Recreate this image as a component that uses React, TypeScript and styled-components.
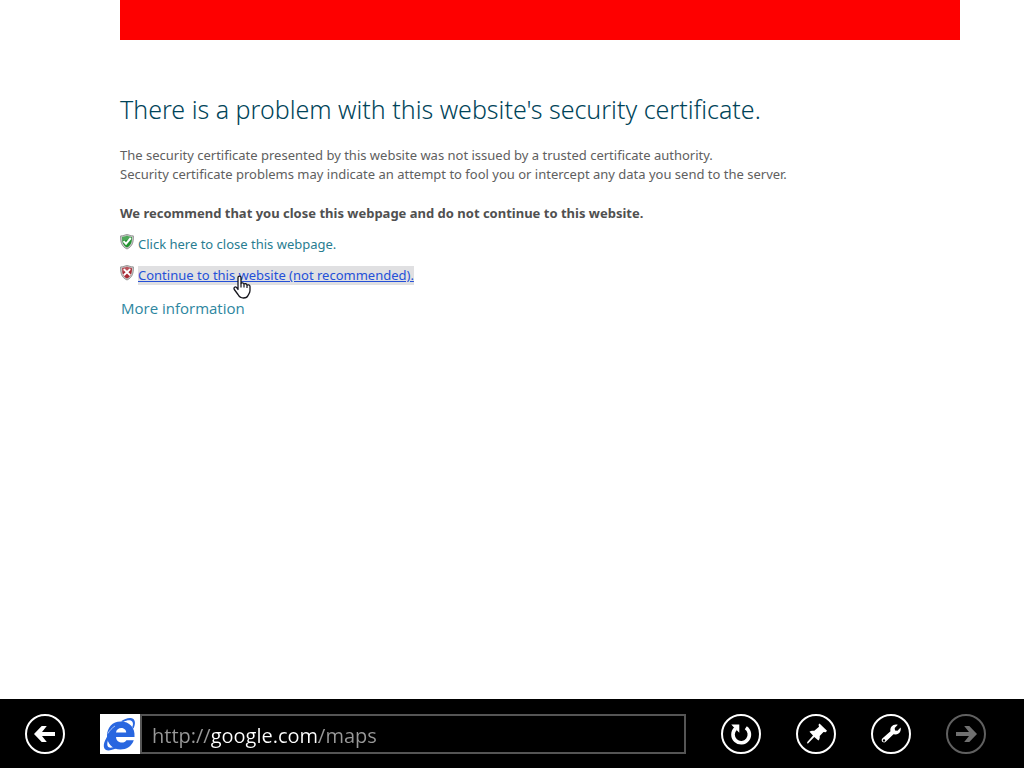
import React, { useState } from "react";
import styled, { createGlobalStyle, css } from "styled-components";

const GlobalStyle = createGlobalStyle`
  *, *::before, *::after { box-sizing: border-box; }
  body {
    margin: 0;
    background: #fff;
    font-family: "Noto Sans", "Open Sans", sans-serif;
  }
`;

const Page = styled.div`
  display: flex;
  flex-direction: column;
  min-height: 100vh;
`;

const Banner = styled.div`
  height: 40px;
  margin: 0 64px 0 120px;
  background: #fe0000;
`;

const Content = styled.main`
  flex: 1;
  padding: 49px 64px 40px 120px;
  color: #606060;
  font-size: 13px;
  line-height: 19px;
`;

const Title = styled.h1`
  margin: 0 0 17px;
  color: #004459;
  font-size: 25px;
  font-weight: 300;
  line-height: 40px;
`;

const Text = styled.p`
  margin: 0 0 20px;
`;

const Recommendation = styled.p`
  margin: 0 0 12px;
  color: #505050;
  font-weight: 700;
`;

const Choices = styled.ul`
  display: flex;
  flex-direction: column;
  gap: 12px;
  margin: 0 0 13px;
  padding: 0;
  list-style: none;
`;

const Choice = styled.li`
  display: flex;
  align-items: flex-start;
  gap: 4px;
`;

const ChoiceLink = styled.a<{ $active?: boolean }>`
  position: relative;
  color: #287d91;
  text-decoration: none;
  ${(p) =>
    p.$active &&
    css`
      color: #2450d8;
      background: #e0e0e2;
      text-decoration: underline;
    `}
`;

const MoreButton = styled.button`
  padding: 0 1px;
  border: 0;
  background: none;
  color: #2d86a0;
  font-family: "Open Sans", sans-serif;
  font-size: 15px;
  line-height: 20px;
`;

const HandCursor = styled.svg`
  position: absolute;
  top: 9px;
  left: 95px;
`;

const AppBar = styled.footer`
  display: flex;
  align-items: center;
  gap: 35px;
  height: 69px;
  padding: 0 38px 0 25px;
  background: #000;
`;

const RoundButton = styled.button`
  flex: none;
  width: 40px;
  height: 40px;
  padding: 0;
  border: 2px solid #fff;
  border-radius: 50%;
  background: none;
  color: #fff;
  &:disabled {
    border-color: #606060;
    color: #707070;
  }
  svg {
    display: block;
  }
`;

const AddressBar = styled.label`
  display: flex;
  flex: 1;
  min-width: 0;
  height: 40px;
`;

const SiteLogo = styled.svg`
  flex: none;
  background: #fff;
`;

const AddressInput = styled.input`
  flex: 1;
  min-width: 0;
  padding: 3px 10px 0;
  border: 2px solid #555;
  outline: 0;
  color: #999;
  font-family: "Open Sans", sans-serif;
  font-size: 20px;
  /* the host name is brighter than the scheme and the path */
  background: linear-gradient(90deg, #999 0 69px, #fff 69px 177px, #999 177px);
  background-clip: text;
  -webkit-background-clip: text;
  -webkit-text-fill-color: transparent;
`;

const ShieldIcon = styled.svg`
  flex: none;
  margin-top: -1px;
`;

const Shield = ({ ok }: { ok?: boolean }) => (
  <ShieldIcon width="14" height="16" viewBox="0 1 14 16" aria-hidden="true">
    <path d="M7 1C5 2.300 3 2.800 .6 2.900 .4 9 1.500 13.500 7 16 12.500 13.500 13.600 9 13.400 2.900 11 2.800 9 2.300 7 1Z" fill="#c9c9c9" stroke="#858585" strokeWidth=".8" />
    <path d="M7 2.500C5.400 3.500 3.800 3.900 2 4 2 9 3 12.500 7 14.500 11 12.500 12 9 12 4 10.200 3.900 8.600 3.500 7 2.500Z" fill={ok ? "#239331" : "#a92a35"} />
    <path d="M7 2.500C5.400 3.500 3.800 3.900 2 4L2.200 7.500C5 8 9 6.500 11.900 4.500V4C10.200 3.900 8.600 3.500 7 2.500Z" fill="#fff" opacity=".2" />
    {ok ? (
      <path d="M3.500 8.100 6 10.800 10.800 5" fill="none" stroke="#fff" strokeWidth="2" />
    ) : (
      <path d="M3.800 5.100 10.200 11.300M10.200 5.100 3.800 11.300" fill="none" stroke="#fff" strokeWidth="1.900" />
    )}
  </ShieldIcon>
);

const Hand = () => (
  <HandCursor width="18" height="24" viewBox="0 0 18 24" aria-hidden="true">
    <path
      d="M5 14.500V2.500C5 .7 8 .7 8 2.500V8.500C8.300 7.500 11 7.500 11 9.300 11.500 8.300 14 8.500 14 10.300 14.700 9.500 17 9.700 17 11.500V15.500C17 18 15.500 19 15 20.500 14.500 22 13 23 10.500 23 7.500 23 6 21.500 5 19.500L1.300 14.500C.3 12.500 2.300 11 3.700 12.600Z"
      fill="#fff" stroke="#15151c" strokeWidth="1.300" strokeLinejoin="round"
    />
    <path d="M8 8.500V12.500M11 9.500V12.500M14 10.500V13" fill="none" stroke="#15151c" strokeWidth="1.200" />
  </HandCursor>
);

const Arrow = ({ forward }: { forward?: boolean }) => (
  <svg width="36" height="36" viewBox="0 0 36 36" aria-hidden="true">
    <path
      d={
        forward
          ? "M8 16H21L16.200 10H21.300L29 18 21.300 26H16.200L21 20H8Z"
          : "M28 16H15L19.800 10H14.700L7 18 14.700 26H19.800L15 20H28Z"
      }
      fill="currentColor"
    />
  </svg>
);

const Refresh = () => (
  <svg width="36" height="36" viewBox="0 0 36 36" aria-hidden="true">
    <path d="M12.600 12.600A8.200 8.200 0 1 0 22.800 11.800" fill="none" stroke="currentColor" strokeWidth="3.600" />
    <path d="M8.300 8.500H16.300V16.700L13.800 14.200 11.200 11.800Z" fill="currentColor" />
  </svg>
);

const Pin = () => (
  <svg width="36" height="36" viewBox="0 0 36 36" aria-hidden="true">
    <path
      d="M21.500 7.500 29 14.800 27.800 16.300 25.500 16 21.700 19.900C22 21.500 21.500 23.500 20.400 24.600L16.300 20.900 10 27.500 9 27.200 9.300 26 15 19.500 11.500 15.800C12.800 14.600 14.600 14.500 16.300 14.800L21 10.800 20.500 8.700Z"
      fill="currentColor"
    />
  </svg>
);

const Wrench = () => (
  <svg width="36" height="36" viewBox="0 0 36 36" aria-hidden="true">
    <path
      fillRule="evenodd"
      d="M24.800 8.700 21.700 12 22 14.500 24.500 14.700 27.600 11.500C28.500 14.500 26.500 18.500 22.600 18.500L20.500 18.200 12.700 25.800C10.500 27.700 7.300 25 9.300 22.500L17.500 15.300C16.500 11 20.500 7.300 24.800 8.700ZM11 23.200A1.200 1.200 0 1 0 11 25.600 1.200 1.200 0 1 0 11 23.200Z"
      fill="currentColor"
    />
  </svg>
);

const BrowserLogo = () => (
  <SiteLogo width="40" height="40" viewBox="0 0 40 40" aria-hidden="true">
    <path
      fillRule="evenodd"
      d="M34.500 23H16C16.300 29.500 24.500 30 26.400 26.300H33.800C31.500 32.500 26.500 35.500 20.500 35.500 12.500 35.500 7 29.500 7 22 7 13.500 12.500 7.500 20.700 7.500 29.500 7.500 35.300 13.500 34.500 23ZM16 18.500H26.200C26.200 12.500 16.500 12.300 16 18.500Z"
      fill="#2866e0"
    />
    <path
      d="M33.500 14.500C35.800 9.500 35.500 5.300 31.800 4.200 28.500 3.300 24.500 5 21 7.200L23 8C27.500 5.800 31.200 5.700 32.500 8 33.300 9.400 33 11.500 32.200 13.200ZM10 18.500C4.500 25.500 2 32.500 5.300 35.400 8.200 37.800 14.500 35.500 19 33L16.700 32C11.800 34 9 34.200 7.900 32.500 6.500 30 8 25 10 21.500Z"
      fill="#2866e0"
    />
    <path d="M8 19.500C9.500 16.500 12 14 15 12" stroke="#fff" strokeWidth=".6" fill="none" />
  </SiteLogo>
);

export default function App() {
  const [address, setAddress] = useState("http://google.com/maps");
  return (
    <Page>
      <GlobalStyle />
      <Banner />
      <Content>
        <Title>There is a problem with this website's security certificate.</Title>
        <Text>
          The security certificate presented by this website was not issued by a trusted certificate authority.
          <br />
          Security certificate problems may indicate an attempt to fool you or intercept any data you send to the server.
        </Text>
        <Recommendation>
          We recommend that you close this webpage and do not continue to this website.
        </Recommendation>
        <Choices>
          <Choice>
            <Shield ok />
            <ChoiceLink href="#close">Click here to close this webpage.</ChoiceLink>
          </Choice>
          <Choice>
            <Shield />
            <ChoiceLink href="#continue" $active>
              Continue to this website (not recommended).
              <Hand />
            </ChoiceLink>
          </Choice>
        </Choices>
        <MoreButton type="button">More information</MoreButton>
      </Content>
      <AppBar>
        <RoundButton type="button" aria-label="Back">
          <Arrow />
        </RoundButton>
        <AddressBar>
          <BrowserLogo />
          <AddressInput
            type="text"
            aria-label="Address"
            spellCheck={false}
            value={address}
            onChange={(e) => setAddress(e.target.value)}
          />
        </AddressBar>
        <RoundButton type="button" aria-label="Refresh">
          <Refresh />
        </RoundButton>
        <RoundButton type="button" aria-label="Pin site">
          <Pin />
        </RoundButton>
        <RoundButton type="button" aria-label="Page tools">
          <Wrench />
        </RoundButton>
        <RoundButton type="button" aria-label="Forward" disabled>
          <Arrow forward />
        </RoundButton>
      </AppBar>
    </Page>
  );
}
